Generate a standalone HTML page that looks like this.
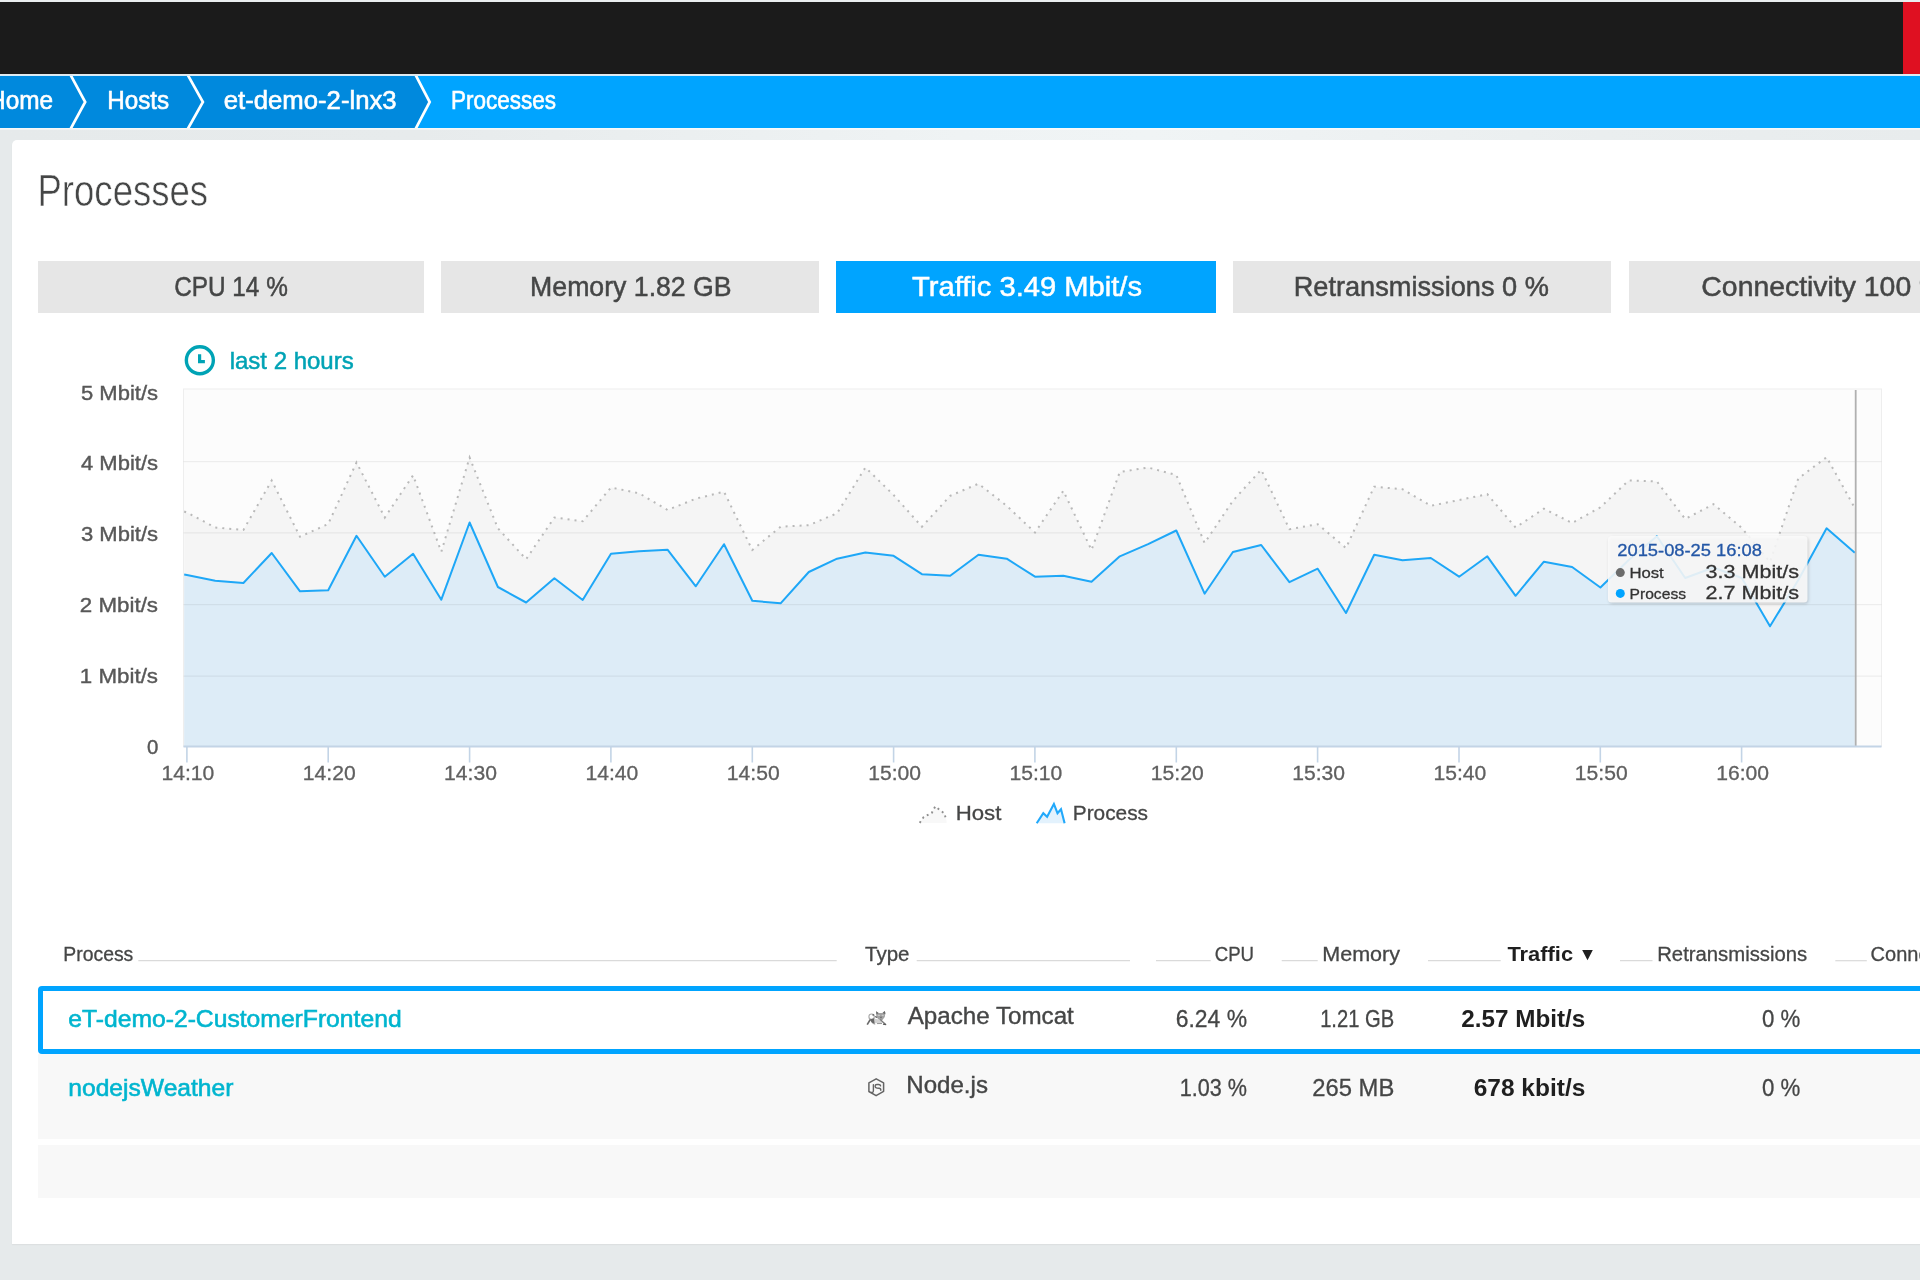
<!DOCTYPE html>
<html lang="en">
<head>
<meta charset="utf-8">
<title>Processes</title>
<style>
html,body{margin:0;padding:0;width:1920px;height:1280px;overflow:hidden;}
body{background:#e6eaeb;font-family:"Liberation Sans",sans-serif;}
#page{position:relative;width:1920px;height:1280px;overflow:hidden;background:#e6eaeb;}
.abs{position:absolute;}
#topline{left:0;top:0;width:1920px;height:2.4px;background:#eaeeef;}
#topbar{left:0;top:2.4px;width:1920px;height:72px;background:#1b1b1b;}
#red{left:1902.6px;top:2.4px;width:18px;height:72px;background:#df1021;}
#sep{left:0;top:74.6px;width:1920px;height:1.9px;background:#d6ecfa;}
#strip{left:0;top:128px;width:1920px;height:12.3px;background:linear-gradient(to right,#e6eaeb 0,#e7ebec 420px,#eff3f4 960px,#f0f4f5 1150px,#eaeeef 1600px,#e8eced 1920px);}
#sep2{left:0;top:128px;width:1920px;height:1.8px;background:linear-gradient(to bottom,rgba(255,255,255,0.75),rgba(255,255,255,0.35));}
#crumbs{left:0;top:76.3px;width:1920px;height:52px;background:#00a4ff;}
#crumbs .dark{left:0;top:0;width:422px;height:52px;background:#0089dd;}
#card{left:12px;top:140px;width:1920px;height:1104.3px;background:#fff;border-radius:5px 0 0 0;box-shadow:0 1px 1.5px rgba(0,0,0,0.05);}
.tab{top:261px;height:52px;background:#e6e6e6;}
.tab.on{background:#00a4ff;}
.row{left:38px;width:1890px;background:#f8f8f8;}
#sel{left:37.8px;top:985.7px;width:1900px;height:58.5px;border:5.2px solid #00a4ff;border-radius:4px;background:#fff;}
svg{position:absolute;left:0;top:0;font-family:"Liberation Sans",sans-serif;will-change:transform;}
</style>
</head>
<body>
<div id="page">
<div id="topline" class="abs"></div>
<div id="topbar" class="abs"></div>
<div id="red" class="abs"></div>
<div id="sep" class="abs"></div>
<div id="crumbs" class="abs"><div class="dark abs"></div>
<svg width="600" height="52" viewBox="0 76.3 600 52" style="left:0;top:0">
<polygon points="415.7,76.3 429.7,102.3 415.7,128.4 600,128.4 600,76.3" fill="#00a4ff"/>
<polygon points="400,76.3 415.7,76.3 429.7,102.3 415.7,128.4 400,128.4" fill="#0089dd"/>
<g fill="none" stroke="#fff" stroke-width="2.7">
<polyline points="70.7,75.5 85.2,102.3 70.7,129"/>
<polyline points="187.9,75.5 202.9,102.3 187.9,129"/>
<polyline points="415.7,75.5 429.7,102.3 415.7,129"/>
</g>
</svg>
</div>
<div id="strip" class="abs"></div>
<div id="sep2" class="abs"></div>
<div id="card" class="abs"></div>
<div class="tab abs" style="left:38px;width:386.2px"></div>
<div class="tab abs" style="left:441.4px;width:378.1px"></div>
<div class="tab on abs" style="left:836.2px;width:380.1px"></div>
<div class="tab abs" style="left:1233px;width:378.3px"></div>
<div class="tab abs" style="left:1628.6px;width:378px"></div>
<div class="row abs" style="top:1054.3px;height:84.3px"></div>
<div class="row abs" style="top:1145px;height:53px"></div>
<div id="sel" class="abs"></div>
<svg width="1920" height="1280" viewBox="0 0 1920 1280">
<text x="-11.92" y="109.3" font-size="25.4" fill="#fff" textLength="65.00" lengthAdjust="spacingAndGlyphs" stroke="#fff" stroke-width="0.6" >Home</text>
<text x="107.29" y="109.3" font-size="25.4" fill="#fff" textLength="61.87" lengthAdjust="spacingAndGlyphs" stroke="#fff" stroke-width="0.6" >Hosts</text>
<text x="223.79" y="109.3" font-size="25.4" fill="#fff" textLength="172.85" lengthAdjust="spacingAndGlyphs" stroke="#fff" stroke-width="0.6" >et-demo-2-lnx3</text>
<text x="451.03" y="109.3" font-size="25.4" fill="#fff" textLength="104.99" lengthAdjust="spacingAndGlyphs" stroke="#fff" stroke-width="0.6" >Processes</text>
<text x="37.48" y="206.3" font-size="43.5" fill="#454646" textLength="170.65" lengthAdjust="spacingAndGlyphs" stroke="#fff" stroke-width="0.6" >Processes</text>
<text x="174.13" y="295.8" font-size="28" fill="#454646" textLength="113.65" lengthAdjust="spacingAndGlyphs" stroke="#454646" stroke-width="0.5" >CPU 14 %</text>
<text x="530.10" y="295.8" font-size="28" fill="#454646" textLength="201.55" lengthAdjust="spacingAndGlyphs" stroke="#454646" stroke-width="0.5" >Memory 1.82 GB</text>
<text x="912.00" y="295.8" font-size="28" fill="#fff" textLength="230.04" lengthAdjust="spacingAndGlyphs" stroke="#fff" stroke-width="0.5" >Traffic 3.49 Mbit/s</text>
<text x="1293.66" y="295.8" font-size="28" fill="#454646" textLength="255.21" lengthAdjust="spacingAndGlyphs" stroke="#454646" stroke-width="0.5" >Retransmissions 0 %</text>
<text x="1701.39" y="295.8" font-size="28" fill="#454646" textLength="242.92" lengthAdjust="spacingAndGlyphs" stroke="#454646" stroke-width="0.5" >Connectivity 100 %</text>
<circle cx="199.85" cy="360.25" r="13.5" fill="none" stroke="#00a3b5" stroke-width="3.4"/>
<path d="M199.6 354.3 V361.6 H204.9" fill="none" stroke="#00a3b5" stroke-width="3.2"/>
<text x="229.70" y="369.4" font-size="24" fill="#00a3b5" textLength="124.00" lengthAdjust="spacingAndGlyphs" stroke="#00a3b5" stroke-width="0.5" >last 2 hours</text>
<rect x="183.5" y="389.0" width="1698.0" height="357.5" fill="#fcfcfc" stroke="#eeeeee" stroke-width="1"/>
<path d="M184.2 511.5 L186.9 512.5 L215.2 527.5 L243.4 530.0 L271.7 480.5 L300.0 536.7 L328.2 524.0 L356.5 462.5 L384.8 517.5 L413.1 475.3 L441.3 551.7 L469.6 457.5 L497.9 528.3 L526.1 559.2 L554.4 517.5 L582.7 521.3 L611.0 487.5 L639.2 493.3 L667.5 510.0 L695.8 498.7 L724.0 491.7 L752.3 550.0 L780.6 526.7 L808.8 525.2 L837.1 513.3 L865.4 467.5 L893.6 495.0 L921.9 526.7 L950.2 495.8 L978.5 483.7 L1006.7 505.8 L1035.0 532.5 L1063.3 490.8 L1091.5 550.0 L1119.8 472.0 L1148.1 467.5 L1176.3 475.0 L1204.6 543.0 L1232.9 500.8 L1261.2 469.7 L1289.4 529.2 L1317.7 524.2 L1346.0 548.0 L1374.2 486.7 L1402.5 489.2 L1430.8 505.8 L1459.1 500.0 L1487.3 494.2 L1515.6 527.5 L1543.9 508.7 L1572.1 523.0 L1600.4 507.3 L1628.7 480.5 L1656.9 481.5 L1685.2 519.0 L1713.5 504.2 L1741.8 528.0 L1770.0 562.0 L1798.3 478.5 L1826.6 457.2 L1854.8 508.0 L1854.8 746.5 L184.2 746.5 Z" fill="#f5f5f5"/>
<path d="M184.2 574.6 L186.9 575.0 L215.2 580.8 L243.4 583.0 L271.7 553.0 L300.0 591.3 L328.2 590.3 L356.5 535.8 L384.8 576.7 L413.1 553.8 L441.3 599.7 L469.6 522.5 L497.9 587.0 L526.1 602.5 L554.4 578.3 L582.7 600.0 L611.0 553.7 L639.2 551.3 L667.5 549.7 L695.8 586.3 L724.0 544.2 L752.3 600.8 L780.6 603.3 L808.8 572.0 L837.1 558.7 L865.4 552.5 L893.6 555.8 L921.9 574.2 L950.2 575.8 L978.5 554.7 L1006.7 558.7 L1035.0 576.7 L1063.3 575.8 L1091.5 581.7 L1119.8 556.3 L1148.1 544.2 L1176.3 530.5 L1204.6 593.7 L1232.9 552.0 L1261.2 545.0 L1289.4 582.2 L1317.7 568.7 L1346.0 613.0 L1374.2 554.7 L1402.5 560.3 L1430.8 558.0 L1459.1 576.7 L1487.3 556.3 L1515.6 595.8 L1543.9 561.7 L1572.1 567.0 L1600.4 587.5 L1628.7 560.0 L1656.9 536.3 L1685.2 578.0 L1713.5 567.5 L1741.8 578.0 L1770.0 626.3 L1798.3 580.0 L1826.6 528.3 L1854.8 552.7 L1854.8 746.5 L184.2 746.5 Z" fill="#ddecf7"/>
<line x1="183.5" x2="1881.5" y1="676.1" y2="676.1" stroke="#000" stroke-opacity="0.06" stroke-width="1.3"/>
<line x1="183.5" x2="1881.5" y1="604.7" y2="604.7" stroke="#000" stroke-opacity="0.06" stroke-width="1.3"/>
<line x1="183.5" x2="1881.5" y1="532.9" y2="532.9" stroke="#000" stroke-opacity="0.06" stroke-width="1.3"/>
<line x1="183.5" x2="1881.5" y1="461.7" y2="461.7" stroke="#000" stroke-opacity="0.06" stroke-width="1.3"/>
<path d="M184.2 511.5 L186.9 512.5 L215.2 527.5 L243.4 530.0 L271.7 480.5 L300.0 536.7 L328.2 524.0 L356.5 462.5 L384.8 517.5 L413.1 475.3 L441.3 551.7 L469.6 457.5 L497.9 528.3 L526.1 559.2 L554.4 517.5 L582.7 521.3 L611.0 487.5 L639.2 493.3 L667.5 510.0 L695.8 498.7 L724.0 491.7 L752.3 550.0 L780.6 526.7 L808.8 525.2 L837.1 513.3 L865.4 467.5 L893.6 495.0 L921.9 526.7 L950.2 495.8 L978.5 483.7 L1006.7 505.8 L1035.0 532.5 L1063.3 490.8 L1091.5 550.0 L1119.8 472.0 L1148.1 467.5 L1176.3 475.0 L1204.6 543.0 L1232.9 500.8 L1261.2 469.7 L1289.4 529.2 L1317.7 524.2 L1346.0 548.0 L1374.2 486.7 L1402.5 489.2 L1430.8 505.8 L1459.1 500.0 L1487.3 494.2 L1515.6 527.5 L1543.9 508.7 L1572.1 523.0 L1600.4 507.3 L1628.7 480.5 L1656.9 481.5 L1685.2 519.0 L1713.5 504.2 L1741.8 528.0 L1770.0 562.0 L1798.3 478.5 L1826.6 457.2 L1854.8 508.0" fill="none" stroke="#b9b9b9" stroke-width="2" stroke-dasharray="2 5"/>
<path d="M184.2 574.6 L186.9 575.0 L215.2 580.8 L243.4 583.0 L271.7 553.0 L300.0 591.3 L328.2 590.3 L356.5 535.8 L384.8 576.7 L413.1 553.8 L441.3 599.7 L469.6 522.5 L497.9 587.0 L526.1 602.5 L554.4 578.3 L582.7 600.0 L611.0 553.7 L639.2 551.3 L667.5 549.7 L695.8 586.3 L724.0 544.2 L752.3 600.8 L780.6 603.3 L808.8 572.0 L837.1 558.7 L865.4 552.5 L893.6 555.8 L921.9 574.2 L950.2 575.8 L978.5 554.7 L1006.7 558.7 L1035.0 576.7 L1063.3 575.8 L1091.5 581.7 L1119.8 556.3 L1148.1 544.2 L1176.3 530.5 L1204.6 593.7 L1232.9 552.0 L1261.2 545.0 L1289.4 582.2 L1317.7 568.7 L1346.0 613.0 L1374.2 554.7 L1402.5 560.3 L1430.8 558.0 L1459.1 576.7 L1487.3 556.3 L1515.6 595.8 L1543.9 561.7 L1572.1 567.0 L1600.4 587.5 L1628.7 560.0 L1656.9 536.3 L1685.2 578.0 L1713.5 567.5 L1741.8 578.0 L1770.0 626.3 L1798.3 580.0 L1826.6 528.3 L1854.8 552.7" fill="none" stroke="#1ea7f7" stroke-width="2" stroke-linejoin="round"/>
<line x1="1855.7" x2="1855.7" y1="390.0" y2="746.5" stroke="#b0b0b0" stroke-width="1.8"/>
<line x1="183.5" x2="1881.5" y1="746.5" y2="746.5" stroke="#c3d4e6" stroke-width="2"/>
<line x1="186.9" x2="186.9" y1="746.5" y2="762.5" stroke="#c3d4e6" stroke-width="1.6"/>
<text x="161.46" y="780.1" font-size="20.3" fill="#606060" textLength="52.83" lengthAdjust="spacingAndGlyphs" stroke="#606060" stroke-width="0.3" >14:10</text>
<line x1="328.2" x2="328.2" y1="746.5" y2="762.5" stroke="#c3d4e6" stroke-width="1.6"/>
<text x="302.80" y="780.1" font-size="20.3" fill="#606060" textLength="52.83" lengthAdjust="spacingAndGlyphs" stroke="#606060" stroke-width="0.3" >14:20</text>
<line x1="469.6" x2="469.6" y1="746.5" y2="762.5" stroke="#c3d4e6" stroke-width="1.6"/>
<text x="444.14" y="780.1" font-size="20.3" fill="#606060" textLength="52.83" lengthAdjust="spacingAndGlyphs" stroke="#606060" stroke-width="0.3" >14:30</text>
<line x1="610.9" x2="610.9" y1="746.5" y2="762.5" stroke="#c3d4e6" stroke-width="1.6"/>
<text x="585.48" y="780.1" font-size="20.3" fill="#606060" textLength="52.83" lengthAdjust="spacingAndGlyphs" stroke="#606060" stroke-width="0.3" >14:40</text>
<line x1="752.3" x2="752.3" y1="746.5" y2="762.5" stroke="#c3d4e6" stroke-width="1.6"/>
<text x="726.82" y="780.1" font-size="20.3" fill="#606060" textLength="52.83" lengthAdjust="spacingAndGlyphs" stroke="#606060" stroke-width="0.3" >14:50</text>
<line x1="893.6" x2="893.6" y1="746.5" y2="762.5" stroke="#c3d4e6" stroke-width="1.6"/>
<text x="868.16" y="780.1" font-size="20.3" fill="#606060" textLength="52.83" lengthAdjust="spacingAndGlyphs" stroke="#606060" stroke-width="0.3" >15:00</text>
<line x1="1034.9" x2="1034.9" y1="746.5" y2="762.5" stroke="#c3d4e6" stroke-width="1.6"/>
<text x="1009.50" y="780.1" font-size="20.3" fill="#606060" textLength="52.83" lengthAdjust="spacingAndGlyphs" stroke="#606060" stroke-width="0.3" >15:10</text>
<line x1="1176.3" x2="1176.3" y1="746.5" y2="762.5" stroke="#c3d4e6" stroke-width="1.6"/>
<text x="1150.84" y="780.1" font-size="20.3" fill="#606060" textLength="52.83" lengthAdjust="spacingAndGlyphs" stroke="#606060" stroke-width="0.3" >15:20</text>
<line x1="1317.6" x2="1317.6" y1="746.5" y2="762.5" stroke="#c3d4e6" stroke-width="1.6"/>
<text x="1292.18" y="780.1" font-size="20.3" fill="#606060" textLength="52.83" lengthAdjust="spacingAndGlyphs" stroke="#606060" stroke-width="0.3" >15:30</text>
<line x1="1459.0" x2="1459.0" y1="746.5" y2="762.5" stroke="#c3d4e6" stroke-width="1.6"/>
<text x="1433.52" y="780.1" font-size="20.3" fill="#606060" textLength="52.83" lengthAdjust="spacingAndGlyphs" stroke="#606060" stroke-width="0.3" >15:40</text>
<line x1="1600.3" x2="1600.3" y1="746.5" y2="762.5" stroke="#c3d4e6" stroke-width="1.6"/>
<text x="1574.86" y="780.1" font-size="20.3" fill="#606060" textLength="52.83" lengthAdjust="spacingAndGlyphs" stroke="#606060" stroke-width="0.3" >15:50</text>
<line x1="1741.6" x2="1741.6" y1="746.5" y2="762.5" stroke="#c3d4e6" stroke-width="1.6"/>
<text x="1716.20" y="780.1" font-size="20.3" fill="#606060" textLength="52.83" lengthAdjust="spacingAndGlyphs" stroke="#606060" stroke-width="0.3" >16:00</text>
<text x="81.00" y="399.5" font-size="20" fill="#585858" textLength="77.00" lengthAdjust="spacingAndGlyphs" stroke="#585858" stroke-width="0.4" >5 Mbit/s</text>
<text x="81.00" y="470.3" font-size="20" fill="#585858" textLength="77.00" lengthAdjust="spacingAndGlyphs" stroke="#585858" stroke-width="0.4" >4 Mbit/s</text>
<text x="81.00" y="541.2" font-size="20" fill="#585858" textLength="77.00" lengthAdjust="spacingAndGlyphs" stroke="#585858" stroke-width="0.4" >3 Mbit/s</text>
<text x="79.88" y="612" font-size="20" fill="#585858" textLength="78.12" lengthAdjust="spacingAndGlyphs" stroke="#585858" stroke-width="0.4" >2 Mbit/s</text>
<text x="79.88" y="682.5" font-size="20" fill="#585858" textLength="78.12" lengthAdjust="spacingAndGlyphs" stroke="#585858" stroke-width="0.4" >1 Mbit/s</text>
<text x="146.90" y="754.0" font-size="20.4" fill="#585858" textLength="11.34" lengthAdjust="spacingAndGlyphs" stroke="#585858" stroke-width="0.4" >0</text>
<path d="M919.7 823 L923.7 817 L931.7 813 L935.2 806.5 L944.4 813.4 L946.6 821 L946.6 823 Z" fill="#f8f8f8"/>
<path d="M919.7 822.9 L923.7 817 L931.7 813 L935.2 806.5 L944.4 813.4 L946.4 820.6" fill="none" stroke="#8e8e8e" stroke-width="1.9" stroke-dasharray="1.9 3.4"/>
<text x="955.72" y="820" font-size="20.5" fill="#454646" textLength="45.65" lengthAdjust="spacingAndGlyphs" stroke="#454646" stroke-width="0.3" >Host</text>
<path d="M1036.7 823.3 L1043.3 813.2 L1047.1 816.7 L1053.9 803.9 L1057.5 813.2 L1061 809.2 L1064.6 823.3 Z" fill="#e3f2fd"/>
<path d="M1036.7 823.3 L1043.3 813.2 L1047.1 816.7 L1053.9 803.9 L1057.5 813.2 L1061 809.2 L1064.6 823.3" fill="none" stroke="#22a9fb" stroke-width="2.1" stroke-linejoin="miter"/>
<text x="1072.78" y="820" font-size="20.5" fill="#454646" textLength="75.27" lengthAdjust="spacingAndGlyphs" stroke="#454646" stroke-width="0.3" >Process</text>
<defs><filter id="sh" x="-10%" y="-20%" width="120%" height="150%"><feGaussianBlur stdDeviation="1.6"/></filter></defs>
<rect x="1609" y="537.5" width="199.5" height="66.5" rx="4" fill="#000" fill-opacity="0.16" filter="url(#sh)"/>
<rect x="1608" y="536" width="199.5" height="66.5" rx="3.5" fill="#fbfbfb" fill-opacity="0.88"/>
<text x="1617.30" y="555.7" font-size="16" fill="#2457a6" textLength="144.58" lengthAdjust="spacingAndGlyphs" stroke="#2457a6" stroke-width="0.3" >2015-08-25 16:08</text>
<circle cx="1620.3" cy="572.6" r="4.5" fill="#6b6b6b"/>
<circle cx="1620.3" cy="593.4" r="4.5" fill="#00a4ff"/>
<text x="1629.42" y="578.1" font-size="15.5" fill="#333" textLength="34.33" lengthAdjust="spacingAndGlyphs" stroke="#333" stroke-width="0.3" >Host</text>
<text x="1629.49" y="599" font-size="15.5" fill="#333" textLength="56.56" lengthAdjust="spacingAndGlyphs" stroke="#333" stroke-width="0.3" >Process</text>
<text x="1705.60" y="578.1" font-size="19" fill="#333" textLength="93.57" lengthAdjust="spacingAndGlyphs" stroke="#333" stroke-width="0.3" >3.3 Mbit/s</text>
<text x="1705.60" y="599" font-size="19" fill="#333" textLength="93.57" lengthAdjust="spacingAndGlyphs" stroke="#333" stroke-width="0.3" >2.7 Mbit/s</text>
<text x="63.33" y="961" font-size="20" fill="#454646" textLength="69.97" lengthAdjust="spacingAndGlyphs" stroke="#454646" stroke-width="0.3" >Process</text>
<text x="865.00" y="961" font-size="20" fill="#454646" textLength="44.43" lengthAdjust="spacingAndGlyphs" stroke="#454646" stroke-width="0.3" >Type</text>
<text x="1214.77" y="961" font-size="20" fill="#454646" textLength="39.27" lengthAdjust="spacingAndGlyphs" stroke="#454646" stroke-width="0.3" >CPU</text>
<text x="1322.22" y="961" font-size="20" fill="#454646" textLength="77.78" lengthAdjust="spacingAndGlyphs" stroke="#454646" stroke-width="0.3" >Memory</text>
<text x="1507.40" y="961" font-size="20" fill="#1f1f1f" font-weight="bold" textLength="65.73" lengthAdjust="spacingAndGlyphs" >Traffic</text>
<path d="M1582.2 950 H1592.8 L1587.5 960.3 Z" fill="#1f1f1f"/>
<text x="1657.19" y="961" font-size="20" fill="#454646" textLength="150.01" lengthAdjust="spacingAndGlyphs" stroke="#454646" stroke-width="0.3" >Retransmissions</text>
<text x="1870.60" y="961" font-size="20" fill="#454646" textLength="109.00" lengthAdjust="spacingAndGlyphs" stroke="#454646" stroke-width="0.3" >Connectivity</text>
<line x1="138.3" x2="836.7" y1="960.7" y2="960.7" stroke="#dadada" stroke-width="1.2"/>
<line x1="916.7" x2="1130" y1="960.7" y2="960.7" stroke="#dadada" stroke-width="1.2"/>
<line x1="1156" x2="1210.7" y1="960.7" y2="960.7" stroke="#dadada" stroke-width="1.2"/>
<line x1="1281.7" x2="1317.7" y1="960.7" y2="960.7" stroke="#dadada" stroke-width="1.2"/>
<line x1="1428" x2="1500.7" y1="960.7" y2="960.7" stroke="#dadada" stroke-width="1.2"/>
<line x1="1620" x2="1652.5" y1="960.7" y2="960.7" stroke="#dadada" stroke-width="1.2"/>
<line x1="1835.3" x2="1866.8" y1="960.7" y2="960.7" stroke="#dadada" stroke-width="1.2"/>
<text x="68.29" y="1027.4" font-size="24.5" fill="#00b5cf" textLength="333.34" lengthAdjust="spacingAndGlyphs" stroke="#00b5cf" stroke-width="0.6" >eT-demo-2-CustomerFrontend</text>
<text x="68.30" y="1095.8" font-size="24.5" fill="#00b5cf" textLength="165.16" lengthAdjust="spacingAndGlyphs" stroke="#00b5cf" stroke-width="0.6" >nodejsWeather</text>
<text x="907.70" y="1024.2" font-size="24.5" fill="#454646" textLength="166.11" lengthAdjust="spacingAndGlyphs" stroke="#454646" stroke-width="0.4" >Apache Tomcat</text>
<text x="906.34" y="1092.5" font-size="24.5" fill="#454646" textLength="81.61" lengthAdjust="spacingAndGlyphs" stroke="#454646" stroke-width="0.4" >Node.js</text>
<text x="1175.75" y="1027.3" font-size="24" fill="#454646" textLength="71.28" lengthAdjust="spacingAndGlyphs" stroke="#454646" stroke-width="0.3" >6.24 %</text>
<text x="1179.80" y="1095.7" font-size="24" fill="#454646" textLength="67.21" lengthAdjust="spacingAndGlyphs" stroke="#454646" stroke-width="0.3" >1.03 %</text>
<text x="1320.16" y="1027.3" font-size="24" fill="#454646" textLength="73.99" lengthAdjust="spacingAndGlyphs" stroke="#454646" stroke-width="0.3" >1.21 GB</text>
<text x="1312.31" y="1095.7" font-size="24" fill="#454646" textLength="81.99" lengthAdjust="spacingAndGlyphs" stroke="#454646" stroke-width="0.3" >265 MB</text>
<text x="1461.30" y="1027" font-size="24" fill="#1f1f1f" font-weight="bold" textLength="124.05" lengthAdjust="spacingAndGlyphs" >2.57 Mbit/s</text>
<text x="1473.70" y="1095.8" font-size="24" fill="#1f1f1f" font-weight="bold" textLength="111.65" lengthAdjust="spacingAndGlyphs" >678 kbit/s</text>
<text x="1762.00" y="1027.3" font-size="24" fill="#454646" textLength="38.31" lengthAdjust="spacingAndGlyphs" stroke="#454646" stroke-width="0.3" >0 %</text>
<text x="1762.00" y="1095.7" font-size="24" fill="#454646" textLength="38.31" lengthAdjust="spacingAndGlyphs" stroke="#454646" stroke-width="0.3" >0 %</text>
<defs><filter id="bl" x="-20%" y="-20%" width="140%" height="140%"><feGaussianBlur stdDeviation="0.45"/></filter></defs>
<g filter="url(#bl)"><circle cx="871.6" cy="1016.7" r="2.7" fill="none" stroke="#a8a8a8" stroke-width="1.1"/><circle cx="873.3" cy="1014.9" r="0.95" fill="#6e6e6e"/><path d="M876.1 1011.2 L878.4 1012.9 L882.4 1012.9 L884.6 1010.9 L885.4 1012.6 L884.8 1017 L882.4 1019.9 L879 1019.9 L876.4 1017 Z" fill="#a2a2a2"/><path d="M876.1 1011.2 L878.6 1013.1 L876.5 1014.6 Z" fill="#6a6a6a"/><path d="M884.8 1010.9 L885.4 1014.2 L882.6 1013.1 Z" fill="#6a6a6a"/><ellipse cx="878.9" cy="1015.3" rx="1.3" ry="0.55" fill="#d4d4d4"/><ellipse cx="882.7" cy="1015.3" rx="1.1" ry="0.55" fill="#d4d4d4"/><path d="M879.8 1016.8 L882.2 1016.8 L881 1018.6 Z" fill="#666"/><path d="M875.2 1016.6 L877 1017.6" stroke="#555" stroke-width="1.2" fill="none"/><path d="M869.7 1019.4 L874.3 1018.2 L874.8 1023.8 L871.8 1022.8 Z" fill="#686868"/><path d="M870.2 1019.6 L867.2 1024.6" stroke="#686868" stroke-width="1.7" fill="none"/><path d="M874.6 1018.8 L880 1019.8 L882.3 1023 L875 1023.2 Z" fill="#d2d2d2"/><path d="M880.2 1019.4 L885.6 1024.4" stroke="#7a7a7a" stroke-width="1.4" fill="none"/><path d="M883 1024.2 L886.2 1024.7" stroke="#5a5a5a" stroke-width="1.3" fill="none"/><path d="M872.5 1023.3 L875.2 1024.2 M877 1023.6 L882 1023.5" stroke="#8a8a8a" stroke-width="0.9" fill="none"/></g>
<g fill="none" stroke="#646464" stroke-width="1.5" stroke-linejoin="round" stroke-linecap="round"><path d="M876.2 1078.8 L883.6 1082.9 L883.6 1091.3 L876.1 1095.7 L868.9 1091.5 L868.9 1082.9 Z"/><path d="M873.4 1084.6 V1090.6 Q873.4 1092.9 871.3 1092.4" stroke-width="1.4"/><path d="M880.6 1085.8 Q880.4 1084.5 878.6 1084.5 H876.9 Q875.1 1084.5 875.1 1086.2 Q875.1 1087.9 877 1088.1 L879 1088.3 Q880.9 1088.5 880.8 1090.2" stroke-width="1.4"/></g>
</svg>
</div>
</body>
</html>
